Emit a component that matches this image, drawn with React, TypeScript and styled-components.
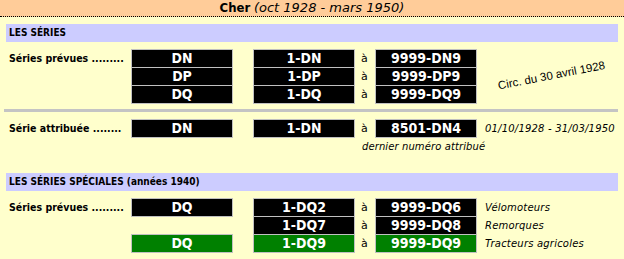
import React from "react";
import styled, { createGlobalStyle } from "styled-components";

type PlateColor = "black" | "green";

type SeriesRow = {
  label?: string;
  serie?: string;
  serieColor?: PlateColor;
  from: string;
  to: string;
  color?: PlateColor;
  note?: string;
};

const GlobalStyle = createGlobalStyle`
  html, body {
    margin: 0;
    padding: 0;
    background: #ffffcc;
  }
  body {
    font-family: "DejaVu Sans Condensed", "DejaVu Sans", sans-serif;
    color: #000;
  }
`;

const Page = styled.div`
  width: 624px;
  height: 259px;
  overflow: hidden;
`;

const TitleBar = styled.div`
  height: 16px;
  line-height: 16px;
  background: #ffcc99;
  border-bottom: 1px dotted #000;
  text-align: center;
  font-size: 13px;
  white-space: nowrap;
`;

const TitleName = styled.b`
  font-weight: bold;
`;

const TitleDates = styled.i`
  font-family: "DejaVu Sans", sans-serif;
  font-style: italic;
`;

const Content = styled.div`
  padding: 0 6px;
`;

const SectionBar = styled.div<{ $gap: number }>`
  margin-top: ${(p) => p.$gap}px;
  height: 18px;
  line-height: 18px;
  padding-left: 3px;
  background: #ccccff;
  font-size: 10px;
  font-weight: bold;
  white-space: nowrap;
`;

const SeriesGrid = styled.div`
  display: grid;
  grid-template-columns: 125px 102px 20px 102px 20px 102px 1fr;
  grid-auto-rows: 18px;
  margin-top: 7px;
`;

const Label = styled.div`
  align-self: center;
  padding-left: 3px;
  font-size: 10.5px;
  font-weight: bold;
  white-space: nowrap;
`;

const Plate = styled.div<{ $color: PlateColor }>`
  box-sizing: border-box;
  align-self: start;
  height: 19px;
  border: 1px solid #c0c0c0;
  background: ${(p) => (p.$color === "green" ? "#008000" : "#000")};
  color: #fff;
  font-size: 14px;
  font-weight: bold;
  line-height: 17px;
  text-align: center;
`;

const Blank = styled.div``;

const To = styled.div`
  align-self: center;
  padding-left: 6px;
  font-family: "DejaVu Sans", sans-serif;
  font-size: 11px;
`;

const Note = styled.div`
  align-self: center;
  padding-left: 8px;
  font-family: "DejaVu Sans", sans-serif;
  font-style: italic;
  font-size: 10px;
  letter-spacing: 0.2px;
  white-space: nowrap;
`;

const Caption = styled(Note)`
  grid-column: 5 / -1;
  padding-left: 7px;
  letter-spacing: 0.1px;
`;

const Stamp = styled.div`
  grid-row: span 3;
  display: flex;
  align-items: center;
  justify-content: center;
  padding-left: 8px;
  font-family: "Liberation Sans", sans-serif;
  font-size: 11.5px;
  white-space: nowrap;
  transform: rotate(-11deg);
`;

const Divider = styled.div`
  height: 3px;
  margin: 6px 0 0 -2px;
  background: #c4c4c4;
`;

const prevues: SeriesRow[] = [
  { label: "Séries prévues .........", serie: "DN", from: "1-DN", to: "9999-DN9" },
  { serie: "DP", from: "1-DP", to: "9999-DP9" },
  { serie: "DQ", from: "1-DQ", to: "9999-DQ9" },
];

const speciales: SeriesRow[] = [
  { label: "Séries prévues .........", serie: "DQ", from: "1-DQ2", to: "9999-DQ6", note: "Vélomoteurs" },
  { from: "1-DQ7", to: "9999-DQ8", note: "Remorques" },
  { serie: "DQ", serieColor: "green", from: "1-DQ9", to: "9999-DQ9", color: "green", note: "Tracteurs agricoles" },
];

const RowCells = ({ row, withNote = true }: { row: SeriesRow; withNote?: boolean }) => (
  <>
    <Label>{row.label}</Label>
    {row.serie ? <Plate $color={row.serieColor ?? row.color ?? "black"}>{row.serie}</Plate> : <Blank />}
    <Blank />
    <Plate $color={row.color ?? "black"}>{row.from}</Plate>
    <To>à</To>
    <Plate $color={row.color ?? "black"}>{row.to}</Plate>
    {withNote && <Note>{row.note}</Note>}
  </>
);

export default function App() {
  return (
    <Page>
      <GlobalStyle />
      <TitleBar>
        <TitleName>Cher</TitleName> <TitleDates>(oct 1928 - mars 1950)</TitleDates>
      </TitleBar>
      <Content>
        <SectionBar $gap={7}>LES SÉRIES</SectionBar>
        <SeriesGrid>
          {prevues.map((row, i) => (
            <React.Fragment key={row.to}>
              <RowCells row={row} withNote={false} />
              {i === 0 && <Stamp>Circ. du 30 avril 1928</Stamp>}
            </React.Fragment>
          ))}
        </SeriesGrid>
        <Divider />
        <SeriesGrid>
          <RowCells
            row={{ label: "Série attribuée ........", serie: "DN", from: "1-DN", to: "8501-DN4", note: "01/10/1928 - 31/03/1950" }}
          />
          <Caption>dernier numéro attribué</Caption>
        </SeriesGrid>
        <SectionBar $gap={18}>LES SÉRIES SPÉCIALES (années 1940)</SectionBar>
        <SeriesGrid>
          {speciales.map((row) => (
            <RowCells key={row.from} row={row} />
          ))}
        </SeriesGrid>
      </Content>
    </Page>
  );
}
